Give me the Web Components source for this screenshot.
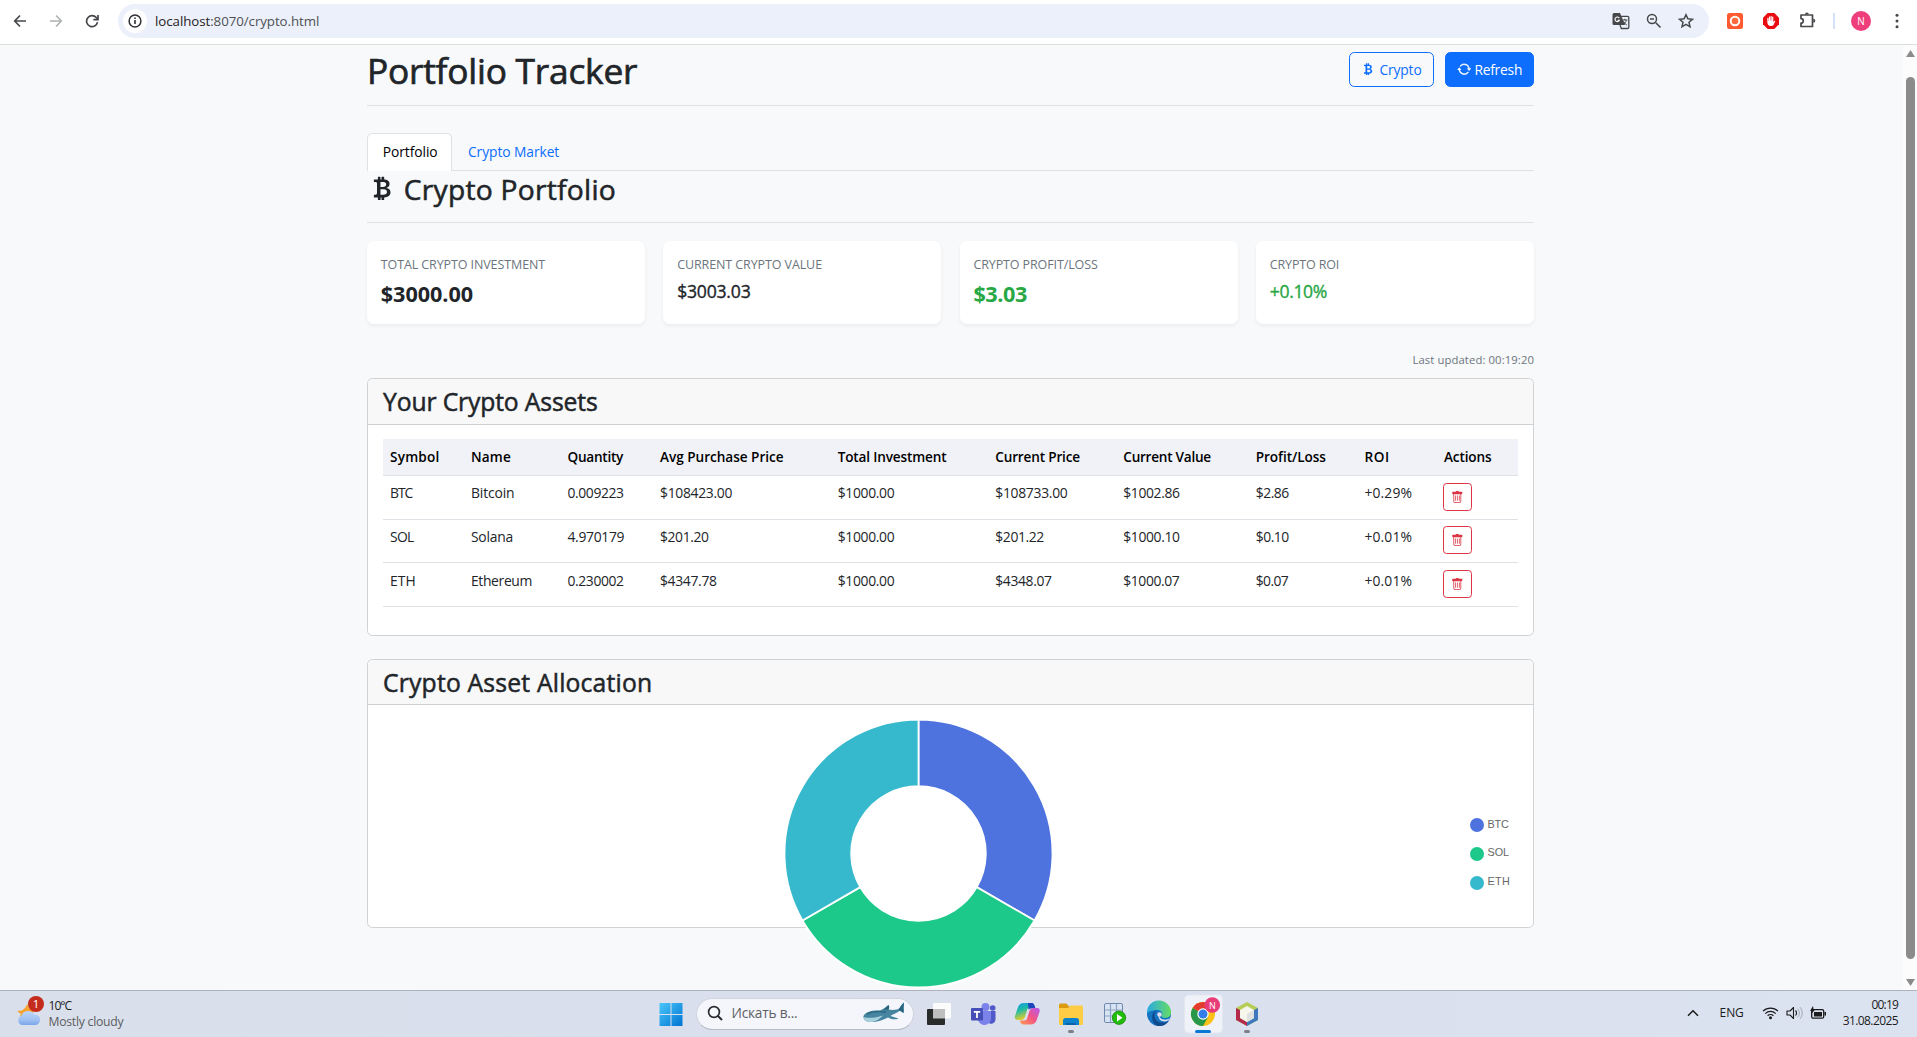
<!DOCTYPE html>
<html lang="en">
<head>
<meta charset="utf-8">
<title>Portfolio Tracker</title>
<style>
html,body{margin:0;height:100%;overflow:hidden}
body{font-family:"Open Sans","Noto Sans",sans-serif;color:#212529;background:#f8f9fb}
</style>
</head>
<body>
<desktop-screen></desktop-screen>
<script>
const define = (name, css, html, setup) => customElements.define(name, class extends HTMLElement {
  connectedCallback() {
    if (this.shadowRoot) return;
    const root = this.attachShadow({ mode: 'open' });
    root.innerHTML = `<style>*{box-sizing:border-box}${css}</style>` + (typeof html === 'function' ? html(this) : html);
    if (setup) setup(this, root);
  }
});

/* Text whose tracking is adjusted so that its ink spans w pixels. */
const ctx = document.createElement('canvas').getContext('2d');
define('fit-text', ':host{display:inline-block;white-space:pre}', '<slot></slot>', el => {
  const w = +el.getAttribute('w'); if (!w) return;
  const cs = getComputedStyle(el), t = el.textContent;
  ctx.font = `${cs.fontWeight} ${cs.fontSize} ${cs.fontFamily}`;
  const m = ctx.measureText(t);
  el.style.letterSpacing = ((w - m.actualBoundingBoxRight - m.actualBoundingBoxLeft) / (t.length - 1)).toFixed(3) + 'px';
});

const btc = '<path d="M5.5 13v1.25c0 .138.112.25.25.25h1a.25.25 0 0 0 .25-.25V13h.5v1.25c0 .138.112.25.25.25h1a.25.25 0 0 0 .25-.25V13h.084c1.992 0 3.416-1.033 3.416-2.82 0-1.502-1.007-2.323-2.186-2.44v-.088c.97-.242 1.683-.974 1.683-2.19C11.997 3.93 10.847 3 9.092 3H9V1.75a.25.25 0 0 0-.25-.25h-1a.25.25 0 0 0-.25.25V3h-.573V1.75a.25.25 0 0 0-.25-.25H5.75a.25.25 0 0 0-.25.25V3l-1.998.011a.25.25 0 0 0-.25.25v.989c0 .137.11.25.248.25l.755-.005a.75.75 0 0 1 .745.75v5.505a.75.75 0 0 1-.75.75l-.748.011a.25.25 0 0 0-.25.25v1c0 .138.112.25.25.25L5.5 13zm1.427-8.513h1.719c.906 0 1.438.498 1.438 1.312 0 .871-.575 1.362-1.877 1.362h-1.28V4.487zm0 4.051h1.84c1.137 0 1.756.58 1.756 1.524 0 .953-.626 1.45-2.158 1.45H6.927V8.539z"/>';
const S = 'fill="none" stroke="currentColor"';
/* name: [width, height, viewBox, markup] */
const ICONS = {
  btc: [16, 16, '0 0 16 16', btc],
  repeat: [14.4, 14.4, '0 0 16 16', '<path d="M11.534 7h3.932a.25.25 0 0 1 .192.41l-1.966 2.36a.25.25 0 0 1-.384 0l-1.966-2.36a.25.25 0 0 1 .192-.41zm-11 2h3.932a.25.25 0 0 0 .192-.41L2.692 6.23a.25.25 0 0 0-.384 0L.342 8.59A.25.25 0 0 0 .534 9z"/><path d="M8 3c-1.552 0-2.94.707-3.857 1.818a.5.5 0 1 1-.771-.636A6.002 6.002 0 0 1 13.917 7H12.9A5.002 5.002 0 0 0 8 3zM3.1 9a5.002 5.002 0 0 0 8.757 2.182.5.5 0 1 1 .771.636A6.002 6.002 0 0 1 2.083 9H3.1z" stroke="currentColor" stroke-width=".5"/>'],
  trash: [12.6, 12.6, '0 0 16 16', '<path d="M5.5 5.5A.5.5 0 0 1 6 6v6a.5.5 0 0 1-1 0V6a.5.5 0 0 1 .5-.5zm2.5 0a.5.5 0 0 1 .5.5v6a.5.5 0 0 1-1 0V6a.5.5 0 0 1 .5-.5zm3 .5a.5.5 0 0 0-1 0v6a.5.5 0 0 0 1 0V6z"/><path d="M14.5 3a1 1 0 0 1-1 1H13v9a2 2 0 0 1-2 2H5a2 2 0 0 1-2-2V4h-.5a1 1 0 0 1-1-1V2a1 1 0 0 1 1-1H6a1 1 0 0 1 1-1h2a1 1 0 0 1 1 1h3.500a1 1 0 0 1 1 1v1zM4.118 4 4 4.059V13a1 1 0 0 0 1 1h6a1 1 0 0 0 1-1V4.059L11.882 4H4.118z"/>'],
  back: [14, 14, '0 0 14 14', `<path ${S} stroke-width="1.700" d="M13 7H2M7 1.500 1.700 7 7 12.500"/>`],
  forward: [14, 14, '0 0 14 14', `<path ${S} stroke-width="1.600" d="M1 7h11M7 1.500 12.300 7 7 12.500"/>`],
  reload: [14, 14, '0 0 14 14', `<path ${S} stroke-width="1.700" d="M12.500 8.200A5.500 5.500 0 1 1 11.200 3.500L12.800 5.200M13 1v4.600H8.400"/>`],
  info: [24, 24, '0 0 24 24', '<circle cx="12" cy="12" r="12" fill="#fff"/><circle cx="12" cy="12" r="5.900" fill="none" stroke="#303236" stroke-width="1.500"/><path d="M11.200 11h1.600v4h-1.600zM11.200 8.500h1.600v1.500h-1.600z" fill="#303236"/>'],
  translate: [18, 18, '0 0 18 18', '<path d="M2 1h6l5 12H2a1.500 1.500 0 0 1-1.500-1.500v-9A1.500 1.500 0 0 1 2 1z" fill="#45474a"/><path d="M8.500 4.300H15.500a1.300 1.300 0 0 1 1.300 1.300v9.600a1.300 1.300 0 0 1-1.300 1.300H9.300L8 13" fill="none" stroke="#45474a" stroke-width="1.300"/><path d="M7.300 6.100A2.300 2.300 0 1 0 7.400 8.300H5.500" fill="none" stroke="#fff" stroke-width="1.100"/><path d="M10 8h5.500M12.800 6.800V8M14.300 8.200c-.5 2-1.700 3.500-3.300 4.600M11.500 9.500c.7 1.500 1.900 2.600 3.400 3.600" fill="none" stroke="#45474a"/>'],
  zoomout: [16, 16, '0 0 16 16', `<path ${S} stroke-width="1.600" d="M9.800 9.800 14.500 14.500M4 6h4"/><circle ${S} stroke-width="1.500" cx="6" cy="6" r="4.500"/>`],
  star: [16, 16, '0 0 16 16', `<path ${S} stroke-width="1.500" d="m8 1.700 1.900 4.100 4.500.500-3.400 3 1 4.500-4-2.400-4 2.400 1-4.500-3.400-3 4.500-.500z"/>`],
  orange: [16, 16, '0 0 16 16', '<rect width="16" height="16" rx="2.500" fill="#ff5a30"/><circle cx="8" cy="8" r="4.300" fill="#ff6b3c" stroke="#fff" stroke-width="2"/>'],
  adblock: [16, 16, '0 0 16 16', '<path d="M4.700 0h6.600L16 4.700v6.600L11.300 16H4.700L0 11.300V4.700z" fill="#e90d12"/><path d="M4.300 8.500V5.200q.6-.8 1.200 0v2.600h.4V3.800q.6-.8 1.200 0v3.700h.4V3.200q.6-.8 1.200 0v4.300h.4V4q.6-.8 1.200 0v5.200l1.100-1.500q1-.2.900.6L10.500 12q-.7 1-2.500 1c-2.600 0-3.700-1.700-3.700-4.500z" fill="#fff"/>'],
  puzzle: [18, 18, '0 0 18 18', `<path ${S} stroke-width="1.700" stroke-linejoin="round" d="M2 3h11.500v11.500H2v-3.300a2.200 2.200 0 0 0 0-4.600z"/><path d="M6 2.500a1.900 1.900 0 0 1 3.800 0zM14.300 6.800a2 2 0 0 1 0 4z" fill="currentColor"/>`],
  avatar: [20, 20, '0 0 20 20', '<circle cx="10" cy="10" r="10" fill="#ee3e7b"/><text x="10" y="13.600" font-size="10" font-family="Open Sans" fill="#fff" text-anchor="middle">N</text>'],
  dots: [4, 16, '0 0 4 16', '<g fill="#45474a"><circle cx="2" cy="2.300" r="1.500"/><circle cx="2" cy="8" r="1.500"/><circle cx="2" cy="13.700" r="1.500"/></g>'],
  weather: [26, 26, '0 0 26 26', '<defs><linearGradient id="c" x2="0" y2="1"><stop stop-color="#bcd5fb"/><stop offset=".6" stop-color="#a2c2f3"/><stop offset="1" stop-color="#7aa6ea"/></linearGradient></defs><path d="M11.500 3 13 7l5 1-3 9H5l-1-2 1-2-4-3 5-.600 3-2.500z" fill="#f5a32c"/><path d="M6 24a5 5 0 0 1-.5-9.500A7 7 0 0 1 18 13.500a5.300 5.300 0 0 1 1.500 10.500z" fill="url(#c)"/>'],
  winlogo: [44, 47, '0 0 44 47', '<defs><linearGradient id="w" gradientUnits="userSpaceOnUse" x1="10" y1="13" x2="33" y2="36"><stop stop-color="#4cc8fb"/><stop offset="1" stop-color="#0074d2"/></linearGradient></defs><path d="M10.500 13h11v11h-11zM22.500 13h11v11h-11zM10.500 25h11v11h-11zM22.500 25h11v11h-11z" fill="url(#w)"/>'],
  search: [16, 16, '0 0 16 16', '<circle cx="7" cy="7" r="5.400" fill="#f7fafc" stroke="#2a2b30" stroke-width="1.700"/><path d="m11 11 4 4" stroke="#2a2b30" stroke-width="2"/>'],
  shark: [44, 22, '0 0 44 22', '<path d="M1.500 14C3 10 10 8 18 8.500l4-2 4.500-3.500c1 1.500.8 3 0 4.500l4 .5c3 0 6-1 7.500-2C38 4.500 40 2 42 .5L41.500 6c.5 1 .5 3 0 5-1.500-1.500-2.500-2-4-2-3 2-7 3.500-9 5l8 2.500c-3 1.500-7 1-10.500-1C22 17.500 16 20 11 20 5 20.500 1 18 1.500 14z" fill="#4585a0"/><path d="M1.500 15C6 16.500 13 16 21 13.500 17 18 12 20.500 8 20 4 19.500 1.500 17.500 1.500 15z" fill="#a9d0dc"/><path d="m21 8 5.500-5c1 1.500.8 3 0 4.500zM37 6.500 42 .5 41.500 6v5l-4-2.500z" fill="#2a6480"/><path d="M5 12c5-3 12-3 19-2" stroke="#2f6883" stroke-width="1.500" fill="none"/>'],
  taskview: [44, 47, '0 0 44 47', '<rect x="16" y="13" width="18" height="15.500" rx="1" fill="#fbfbfb"/><rect x="10" y="19" width="18" height="16" rx="1" fill="#292a2a"/><path d="M16 19h12v9.500H16z" fill="#bebebe"/>'],
  teams: [44, 47, '2 0 44 47', '<circle cx="33.700" cy="18" r="2.800" fill="#5059c9"/><circle cx="26.500" cy="17" r="4" fill="#7b83eb"/><path d="M28 21h8.500v8.500a4.500 4.500 0 0 1-7 3.500z" fill="#5059c9"/><path d="M19 21h13v7.500a6.600 6.600 0 0 1-13 1.500z" fill="#7b83eb"/><rect x="12" y="18" width="12" height="12.500" rx="1" fill="#464eb8"/><path d="M14.800 21h6.400v1.700h-2.300V28h-1.800v-5.300h-2.300z" fill="#fff"/>'],
  copilot: [44, 47, '0 0 44 47', '<defs><linearGradient id="p" x2=".4" y2="1"><stop stop-color="#1297ed"/><stop offset=".45" stop-color="#20bba4"/><stop offset="1" stop-color="#f5ce22"/></linearGradient><linearGradient id="q" x1="1" x2="0" y2="1"><stop stop-color="#b75af0"/><stop offset=".5" stop-color="#f35482"/><stop offset="1" stop-color="#ff9b50"/></linearGradient></defs><path d="M19 13h7q3 0 3.500 4H25q-2 0-2.600 2l-2.300 7.500Q19 30 16 30h-3.500q-3.500 0-2.500-4l3-9q1.500-4 6-4z" fill="url(#p)"/><path d="M23 13h4q2 0 3 4l.5 1.500H26q-1.500 0-2.500 1.300z" fill="#1c45be"/><path d="M25.500 34.500h-7q-3 0-3.500-4H19.500q2 0 2.600-2l2.300-7.500q1.100-3 4.100-3H32q3.500 0 2.500 4l-3 8.500q-1.500 4-6 4z" fill="url(#q)"/>'],
  explorer: [44, 47, '0 0 44 47', '<path d="M10 15a1.500 1.500 0 0 1 1.500-1.500h6l2.500 3h6V24H10z" fill="#dc9a10"/><path d="M10 18h9l2.500-2.500H33a1 1 0 0 1 1 1V34a1 1 0 0 1-1 1H11a1 1 0 0 1-1-1z" fill="#fecd45"/><path d="M14 35v-4.500q0-2.500 2.500-2.500h11q2.500 0 2.500 2.500V35z" fill="#0d83ce"/><path d="M17 33h10v2H17z" fill="#0b63a9"/><rect x="19" y="40" width="6" height="3" rx="1.500" fill="#7c7f87"/>'],
  server: [44, 47, '0 0 44 47', '<rect x="11.500" y="13.500" width="18" height="19" rx="1.500" fill="#d9e4f2" stroke="#7089ae"/><path d="M17.500 14v18M23.500 14v18M12 20h17M12 26h17" stroke="#8ca3c5" stroke-width="1.200"/><circle cx="26" cy="27.700" r="6.700" fill="#22bd0a" stroke="#148505" stroke-width=".8"/><path d="m24 24 5.500 3.700-5.500 3.700z" fill="#fff"/>'],
  edge: [44, 47, '0 0 44 47', '<defs><linearGradient id="e"><stop stop-color="#29a9e6"/><stop offset="1" stop-color="#66dc62"/></linearGradient></defs><circle cx="22" cy="24" r="12" fill="#1573c4"/><path d="M10 23a12 12 0 0 1 24-1c.2 4-2.500 6-6 6-2.500 0-4-1-3.200-2.500 1.700-3-1-5.500-4.500-5.500-4 0-8 1-10.300 3z" fill="url(#e)"/><path d="M20 20c-4 3-3.500 10 2 12 4 1.500 8 0 10-1.500A12 12 0 0 1 20 35.800C13.500 33 13.500 22 20 20z" fill="#114a8b"/><path d="M22 23.500c0 3 .5 5 4.500 6 2.500.5 5-.2 6.500-1.500-.6 2-2.500 3.500-5.500 3.500-4.500 0-7-3.500-5.500-8z" fill="#dae0ee"/><circle cx="22.500" cy="24.500" r="2.300" fill="#dae0ee"/>'],
  chrome: [44, 47, '0 0 44 47', '<rect x="3.500" y="5" width="38" height="38" rx="4" fill="#eff2f9" stroke="#e3e7f0"/><circle cx="22" cy="24" r="12" fill="#fbc118"/><path d="M22 24 11.600 18a12 12 0 0 1 20.800 0z" fill="#e33b2e"/><path d="M22 24 11.600 18A12 12 0 0 0 22 36l5-9z" fill="#27974a"/><circle cx="22" cy="24" r="5.700" fill="#fff"/><circle cx="22" cy="24" r="4.500" fill="#347de9"/><circle cx="31.300" cy="15" r="7.800" fill="#e83c78"/><text x="31.300" y="18.500" font-size="9" font-family="Open Sans" fill="#fff" text-anchor="middle">N</text><rect x="14" y="40" width="16" height="3" rx="1.500" fill="#0878d4"/>'],
  netbeans: [44, 47, '0 0 44 47', '<path d="m22 12 11 6v12l-11 6-11-6V18z" fill="#b6cd56"/><path d="M11 18v12l11 6v-4l-7-4v-8z" fill="#b22b4d"/><path d="M33 18v12l-11 6v-4l7-4v-8z" fill="#3e79bd"/><path d="m22 16 7 4v8l-7 4-7-4v-8z" fill="#f7f6ed"/><path d="M22 24v8l7-4v-8z" fill="#dfe0e0"/><rect x="19" y="40" width="6" height="3" rx="1.500" fill="#7c7f87"/>'],
  chevron: [12, 8, '0 0 12 8', `<path ${S} stroke-width="1.500" d="m1 6.700 5-5 5 5"/>`],
  wifi: [17, 14, '0 0 17 14', `<path ${S} stroke-width="1.200" d="M1 5.200a10.600 10.600 0 0 1 15 0M3.300 7.600a7.300 7.300 0 0 1 10.400 0M5.600 9.800a4.200 4.200 0 0 1 5.800 0"/><circle cx="8.500" cy="11.800" r="1.500" fill="currentColor"/>`],
  speaker: [18, 14, '0 0 18 14', `<path ${S} stroke-width="1.100" stroke-linejoin="round" d="M1 5h3l3.500-3.500v11L4 9H1zM9.500 4.500a3.500 3.500 0 0 1 0 5"/><path d="M11.700 2.800a6 6 0 0 1 0 8.400M14 1.200a8.500 8.500 0 0 1 0 11.600" fill="none" stroke="#a5a9b2"/>`],
  battery: [17, 14, '0 0 17 14', `<rect ${S} stroke-width="1.300" x="1.700" y="3.700" width="12" height="8.500" rx="1.500"/><path d="M4 6h8v4.500H4zM14.500 6H16v3.500h-1.500zM3 0 0 5h2.300L1.500 8 5.500 3H3.500z" fill="currentColor"/>`],
  up: [9, 7, '0 0 9 7', '<path d="M4.500 0 9 7H0z" fill="#8b8b8b"/>'],
  down: [9, 7, '0 0 9 7', '<path d="M4.500 7 0 0h9z" fill="#8b8b8b"/>']
};
define('ui-icon', ':host{display:block;flex:none;line-height:0}svg{display:block;fill:currentColor}', el => {
  const [w, h, vb, body] = ICONS[el.getAttribute('name')];
  const k = (+el.getAttribute('size') || w) / w;
  return `<svg width="${w * k}" height="${h * k}" viewBox="${vb}">${body}</svg>`;
});

define('browser-bar', `
:host{display:flex;flex:none;align-items:center;height:45px;padding:0 19px 3px 13px;background:#fff;border-bottom:1px solid #dcdedc;color:#45474a}
.nav{display:flex;gap:22px;width:105px;flex:none}
.nav ui-icon:nth-child(2){color:#aeb0b2}
.box{display:flex;flex:none;align-items:center;width:1590.500px;height:34px;border-radius:17px;background:#ecf0fa;padding:0 15px 0 5px}
.url{font-size:13.300px;line-height:20px;margin-left:8px;color:#4e5054;display:flex}
.url b{font-weight:400;color:#1f2024}
.tools{margin-left:auto;display:flex;align-items:center;gap:16px}
.ext{display:flex;align-items:center;margin-left:18px}
.sep{width:2px;height:16px;background:#d3e1fb;margin:0 16px 0 16px}`, `
<div class="nav"><ui-icon name="back"></ui-icon><ui-icon name="forward"></ui-icon><ui-icon name="reload"></ui-icon></div>
<div class="box"><ui-icon name="info"></ui-icon><div class="url"><b><fit-text w="54.500">localhost</fit-text></b><fit-text w="108.800">:8070/crypto.html</fit-text></div>
<div class="tools"><ui-icon name="translate"></ui-icon><ui-icon name="zoomout"></ui-icon><ui-icon name="star"></ui-icon></div></div>
<div class="ext"><ui-icon name="orange"></ui-icon><ui-icon name="adblock" style="margin:0 20px"></ui-icon><ui-icon name="puzzle"></ui-icon><span class="sep"></span><ui-icon name="avatar"></ui-icon><ui-icon name="dots" style="margin-left:24px"></ui-icon></div>`);

define('scroll-bar', `
:host{display:flex;flex-direction:column;align-items:center;width:14px;background:#fcfcfc;padding:5px 0 4px}
div{width:9px;height:882px;border-radius:4.500px;background:#8b8b8b;margin:20px 0 auto}`,
'<ui-icon name="up"></ui-icon><div></div><ui-icon name="down"></ui-icon>');

define('action-button', `
:host{display:flex;align-items:center;height:35px;border:1px solid #0d6efd;border-radius:5.400px;color:#0d6efd;font-size:13.800px;line-height:20px;padding:0 11px}
:host([solid]){background:#0d6efd;color:#fff}
slot{display:flex;align-items:center}`, '<slot></slot>');

define('page-header', `
:host{display:flex;flex:none;justify-content:space-between;align-items:flex-start;height:61px;border-bottom:1px solid #dee2e6;padding-top:7px}
h1{margin:-4px 0 0;font-size:35.300px;font-weight:500;line-height:44px;-webkit-text-stroke:.7px currentColor}
.b{display:flex;gap:11px}`, `
<h1><fit-text w="267">Portfolio Tracker</fit-text></h1>
<div class="b"><action-button style="width:85px"><ui-icon name="btc" size="14.400"></ui-icon><fit-text w="42" style="margin-left:4px">Crypto</fit-text></action-button>
<action-button solid style="width:89px"><ui-icon name="repeat"></ui-icon><fit-text w="46.500" style="margin-left:3px">Refresh</fit-text></action-button></div>`);

define('tab-strip', `
:host{display:flex;flex:none;height:38px;margin-top:27px;border-bottom:1px solid #dee2e6;font-size:13.800px;line-height:20px}
span{padding:9px 16px}
.on{width:85px;height:38px;background:#fff;border:1px solid #dee2e6;border-bottom:0;border-radius:5.400px 5.400px 0 0;color:#000;padding:8px 14.800px}
.off{color:#0d6efd}`, '<span class="on"><fit-text w="53.500">Portfolio</fit-text></span><span class="off"><fit-text w="91.300">Crypto Market</fit-text></span>');

define('section-title', `
:host{display:flex;flex:none;height:52px;border-bottom:1px solid #dee2e6;align-items:flex-start}
ui-icon{margin:3px 0 0 .5px}
h2{margin:-.5px 0 0 7.500px;font-size:28.200px;font-weight:500;line-height:36px;-webkit-text-stroke:.55px currentColor}`,
'<ui-icon name="btc" size="28.800"></ui-icon><h2><fit-text w="210">Crypto Portfolio</fit-text></h2>');

define('stat-card', `
:host{display:flex;flex-direction:column;align-items:flex-start;flex:1;height:83px;padding:13.500px 13.800px;border-radius:7.200px;background:#fff;box-shadow:0 2px 4px rgba(0,0,0,.055)}
.l{font-size:12.500px;line-height:20px;color:#6c757d}
.v{font-size:17.600px;font-weight:500;line-height:26px;margin-top:3.500px;-webkit-text-stroke:.35px currentColor}
:host([big]) .v{font-size:21.600px;font-weight:700;margin-top:6px;-webkit-text-stroke:0}
:host([up]) .v{color:#28a745}`,
el => `<fit-text class="l" w="${el.getAttribute('lw')}">${el.getAttribute('label')}</fit-text><fit-text class="v" w="${el.getAttribute('vw')}">${el.getAttribute('value')}</fit-text>`);

define('panel-card', `
:host{display:flex;flex:none;flex-direction:column;background:#fff;border:1px solid #d0d2d3;border-radius:5.400px}
header{flex:none;height:var(--head,46px);background:#f8f8f8;border-bottom:1px solid #cfd0d1;border-radius:5px 5px 0 0;padding:4.500px 15px;font-size:24.700px;font-weight:500;line-height:36px;-webkit-text-stroke:.5px currentColor}
.body{padding:14px 15px}`, el => `<header><fit-text w="${el.getAttribute('tw')}">${el.getAttribute('heading')}</fit-text></header><div class="body"><slot></slot></div>`);

const COLS = [['Symbol',81,48.5],['Name',96.5,39],['Quantity',92.5,56.5],['Avg Purchase Price',177.7,123.7],['Total Investment',157.6,108.5],['Current Price',128,85],['Current Value',132.5,88],['Profit/Loss',108.7,69.5],['ROI',79.5,22.5],['Actions',80,48]];
const ROWS = [
 [['BTC',22.5],['Bitcoin',42],['0.009223',56.5],['$108423.00',72.500],['$1000.00',57],['$108733.00',72.500],['$1002.86',56.700],['$2.86',33.500],['+0.29%',47]],
 [['SOL',24],['Solana',41.500],['4.970179',57],['$201.20',49],['$1000.00',57],['$201.22',49],['$1000.10',56.700],['$0.10',33.500],['+0.01%',47]],
 [['ETH',23.500],['Ethereum',59.500],['0.230002',56.500],['$4347.78',57],['$1000.00',57],['$4348.07',56.700],['$1000.07',56.500],['$0.07',33],['+0.01%',47]]];
define('asset-table', `
:host{display:block;font-size:13.900px;line-height:20px}
.r{display:flex;height:43.600px;border-bottom:1px solid #dee2e6;padding:7.400px 0 0 7px}
.h{height:37px;background:#f1f2f8;font-weight:600;color:#000;padding-top:8px;font-size:13.600px}
.r span{flex:none}
button{display:flex;align-items:center;justify-content:center;width:29px;height:28px;border:1px solid #dc3545;border-radius:3.600px;background:none;color:#dc3545;padding:0;margin:-.6px 0 0 -1px}`,
`<div class="r h">${COLS.map(c => `<span style="width:${c[1]}px"><fit-text w="${c[2]}">${c[0]}</fit-text></span>`).join('')}</div>` +
ROWS.map(r => `<div class="r">${r.map((c, i) => `<span style="width:${COLS[i][1]}px"><fit-text w="${c[1]}">${c[0]}</fit-text></span>`).join('')}<span><button aria-label="Delete"><ui-icon name="trash"></ui-icon></button></span></div>`).join(''));

const seg = (a, b, c) => {
  const p = (r, t) => `${134.5 + r * Math.sin(t)} ${134.5 - r * Math.cos(t)}`, R = 134, q = 67.3;
  return `<path d="M${p(R, a)}A${R} ${R} 0 0 1 ${p(R, b)}L${p(q, b)}A${q} ${q} 0 0 0 ${p(q, a)}z" fill="${c}" stroke="#fff" stroke-width="1.800"/>`;
};
const T = Math.PI * 2 / 3;
define('donut-chart', `
:host{display:flex;padding-left:400.500px}
svg{display:block;flex:none}
.k{display:flex;flex-direction:column;gap:11.800px;margin:96.500px 0 0 auto;width:48.500px;font:10.800px/17px "Liberation Sans",sans-serif;color:#666}
.k div{display:flex;gap:4px}
i{width:14px;height:14px;border-radius:7px;margin-top:2.500px}`,
`<svg width="269" height="269" viewBox="0 0 269 269">${seg(0, T, '#4e73df')}${seg(T, 2 * T, '#1cc88a')}${seg(2 * T, 3 * T, '#36b9cc')}</svg>
<div class="k"><div><i style="background:#4e73df"></i><fit-text w="21.500">BTC</fit-text></div><div><i style="background:#1cc88a"></i><fit-text w="21.500">SOL</fit-text></div><div><i style="background:#36b9cc"></i><fit-text w="21.500">ETH</fit-text></div></div>`);

define('portfolio-page', `
:host{display:flex;flex-direction:column;width:1167px;margin-left:367px;flex:none}
.stats{display:flex;flex:none;gap:18.300px;margin-top:18px}
.upd{flex:none;align-self:flex-end;font-size:11.300px;line-height:18px;color:#6c757d;margin:27px 0 9px}`, `
<page-header></page-header><tab-strip></tab-strip><section-title></section-title>
<div class="stats"><stat-card big label="TOTAL CRYPTO INVESTMENT" lw="164.500" value="$3000.00" vw="92"></stat-card><stat-card label="CURRENT CRYPTO VALUE" lw="145" value="$3003.03" vw="72.500"></stat-card><stat-card big up label="CRYPTO PROFIT/LOSS" lw="124.500" value="$3.03" vw="53.500"></stat-card><stat-card up label="CRYPTO ROI" lw="69" value="+0.10%" vw="57"></stat-card></div>
<fit-text class="upd" w="120">Last updated: 00:19:20</fit-text>
<panel-card heading="Your Crypto Assets" tw="214" style="height:258px"><asset-table></asset-table></panel-card>
<panel-card heading="Crypto Asset Allocation" tw="267" style="height:269px;margin-top:23px;--head:45px"><donut-chart></donut-chart></panel-card>`);

define('task-bar', `
:host{display:flex;height:47px;flex:none;background:linear-gradient(90deg,#dae0eb,#d9dfed 45%,#dce3f0);box-shadow:inset 0 1px #aeb2bb;color:#1b1b1d}
.w{display:flex;flex:none;width:648.500px;padding:11px 0 0 16px;font-size:12.200px;line-height:16px}
.ic{position:relative}
.n{position:absolute;left:12px;top:-5px;width:16px;height:16px;border-radius:8px;background:#c42b1c;color:#fff;text-align:center;font-size:11.500px}
.wt{display:flex;flex-direction:column;align-items:flex-start;margin:-3px 0 0 6.500px}
.wt :last-child{color:#5a5c61}
.s{display:flex;flex:none;align-items:center;width:218px;height:32px;margin:7.500px 3px 0 3.500px;border-radius:16px;background:#f4f6fb;border:1px solid #cfd4df;border-bottom-color:#b5bac5;padding:0 7px 2px 9.500px;font-size:13.700px;color:#5e6065}
.s fit-text{margin-left:9px}
.s ui-icon:last-child{margin-left:auto}
.t{display:flex;align-items:center;height:46px;margin-left:auto;padding-right:19px;font-size:12px;line-height:16px}
.d{display:flex;flex-direction:column;align-items:flex-end;margin:-1px 0 0 16px}`, `
<div class="w"><div class="ic"><ui-icon name="weather"></ui-icon><span class="n">1</span></div><div class="wt"><fit-text w="23">10°C</fit-text><fit-text w="75">Mostly cloudy</fit-text></div></div>
<ui-icon name="winlogo"></ui-icon>
<div class="s"><ui-icon name="search"></ui-icon><fit-text w="64.500">Искать в...</fit-text><ui-icon name="shark"></ui-icon></div>
${['taskview','teams','copilot','explorer','server','edge','chrome','netbeans'].map(n => `<ui-icon name="${n}"></ui-icon>`).join('')}
<div class="t"><ui-icon name="chevron"></ui-icon><fit-text w="22.500" style="margin:0 18px 0 21px">ENG</fit-text><ui-icon name="wifi"></ui-icon><ui-icon name="speaker" style="margin:0 6px 0 7px"></ui-icon><ui-icon name="battery"></ui-icon><div class="d"><fit-text w="27.500">00:19</fit-text><fit-text w="56">31.08.2025</fit-text></div></div>`);

define('desktop-screen', `
:host{display:flex;flex-direction:column;width:1917px;height:1037px;overflow:hidden}
main{display:flex;justify-content:space-between;align-items:stretch;height:945px;flex:none;background:#f8f9fb;overflow:hidden}`,
'<browser-bar></browser-bar><main><portfolio-page></portfolio-page><scroll-bar></scroll-bar></main><task-bar></task-bar>');
</script>
</body>
</html>
